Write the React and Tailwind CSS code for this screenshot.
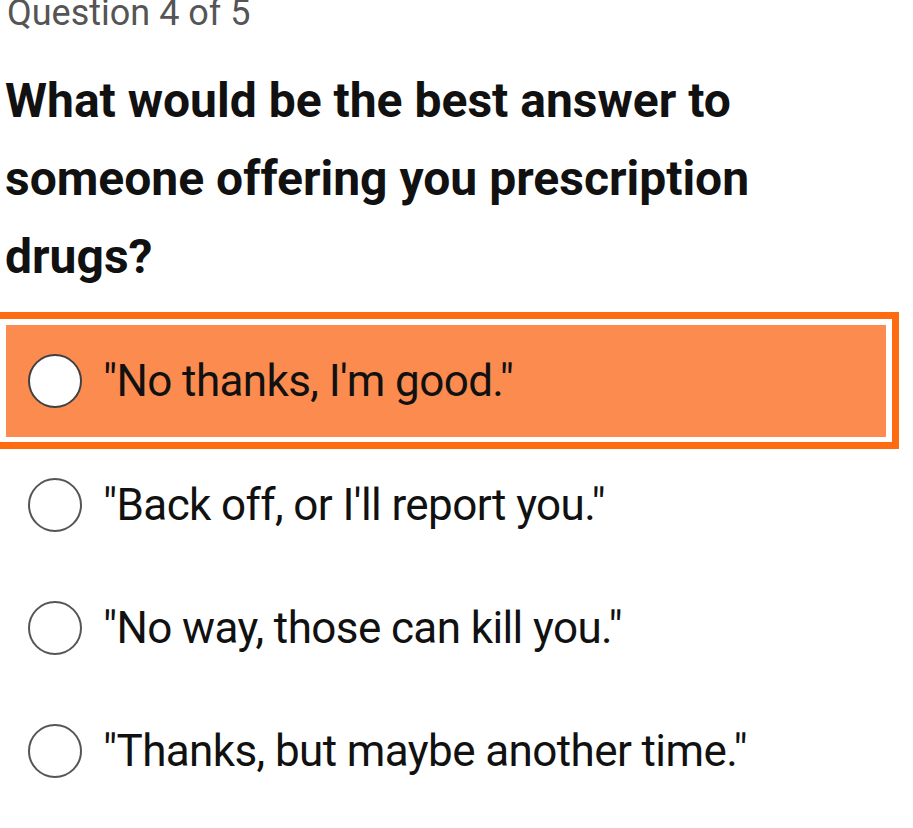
import React from 'react'

const options = [
  { id: 1, text: '"No thanks, I\'m good."', selected: true },
  { id: 2, text: '"Back off, or I\'ll report you."' },
  { id: 3, text: '"No way, those can kill you."' },
  { id: 4, text: '"Thanks, but maybe another time."' },
]

function Radio({ selected }) {
  return (
    <span
      className={
        selected
          ? 'w-[54px] h-[54px] shrink-0 rounded-full border-[2.5px] border-[#404040] bg-white'
          : 'w-[54px] h-[54px] shrink-0 rounded-full border-[2.5px] border-[#555555]'
      }
    />
  )
}

export default function App() {
  const [first, ...rest] = options
  return (
    <div className="w-full h-[828px] overflow-hidden bg-white text-[#111111] font-['Roboto',sans-serif]">
      <div className="pl-[7px] -mt-[5px] text-[36px] leading-[36px] font-normal text-[#555555]">Question 4 of 5</div>

      <h1 className="mt-[31px] pl-[5px] text-[48px] leading-[78px] font-bold">
        <div>What would be the best answer to</div>
        <div>someone offering you prescription</div>
        <div>drugs?</div>
      </h1>

      <div className="mt-[16px] -ml-[7px] w-[906px] border-[7px] border-[#ff6b10] bg-white px-[6px] pt-[6px] pb-[5px]">
        <div className="h-[112px] bg-[#fb8b4f] flex items-center pl-[22px] gap-[21px]">
          <Radio selected />
          <span className="text-[44px] tracking-[-0.6px]">{first.text}</span>
        </div>
      </div>

      <div className="flex flex-col gap-[11px]">
        {rest.map(o => (
          <div key={o.id} className="h-[112px] flex items-center pl-[28px] gap-[21px]">
            <Radio />
            <span className="text-[44px] tracking-[-0.6px]">{o.text}</span>
          </div>
        ))}
      </div>
    </div>
  )
}
